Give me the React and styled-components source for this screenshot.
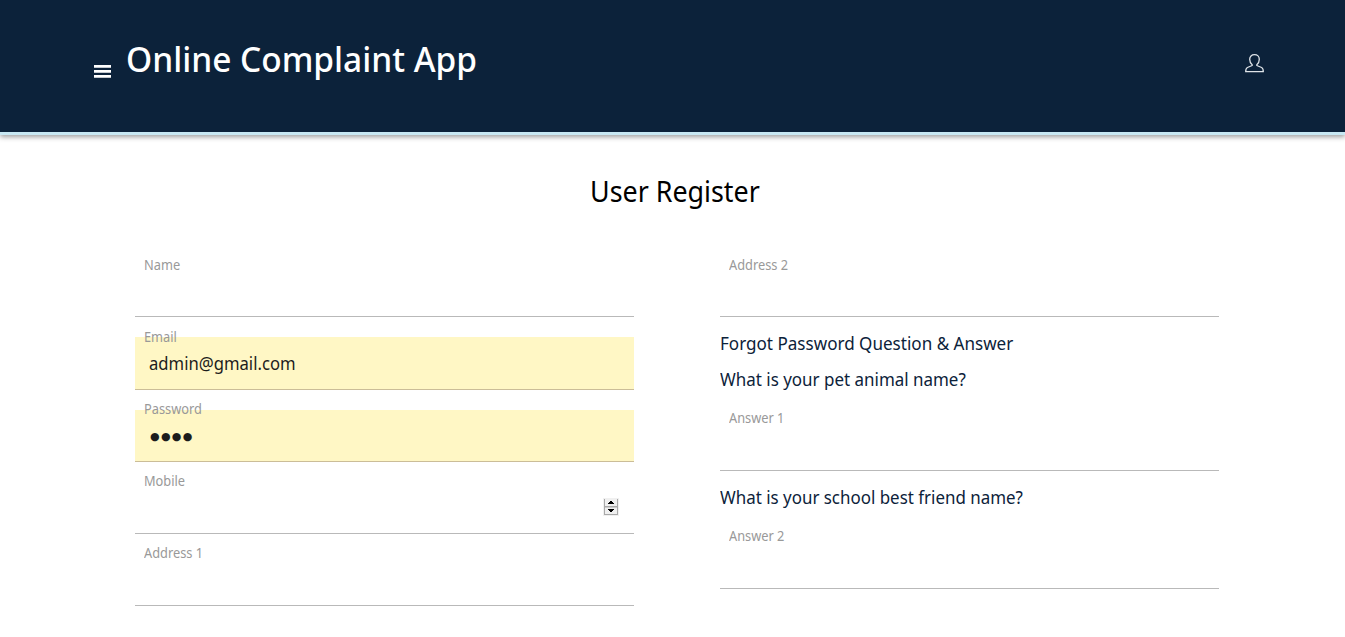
import React from "react";
import styled, { createGlobalStyle } from "styled-components";

const GlobalStyle = createGlobalStyle`
  * { box-sizing: border-box; }
  html, body { height: 100%; }
  body {
    margin: 0;
    overflow: hidden;
    background: #fff;
    font-family: "Noto Sans", "Open Sans", sans-serif;
    color: #0c223a;
  }
`;

const Header = styled.header`
  display: flex;
  align-items: flex-start;
  height: 135px;
  padding: 0 81.5px 0 94px;
  background: #0c223a;
  border-bottom: 3px solid #c8e8f3;
  box-shadow: 0 2px 5px rgba(0, 0, 0, 0.38);
`;

const MenuIcon = styled.svg`
  width: 17px;
  height: 14px;
  margin-top: 65px;
  fill: #fff;
`;

const Text = styled.span`
  display: inline-block;
  white-space: nowrap;
  transform: scaleX(${(p) => p.$squeeze || 1});
  transform-origin: left center;
`;

const Brand = styled.h1`
  flex: 1;
  margin: 34px 0 0 15px;
  font-size: 35px;
  font-weight: 500;
  line-height: 50px;
  color: #fff;
`;

const UserIcon = styled.svg`
  width: 19px;
  height: 19px;
  margin-top: 54px;
  fill: none;
  stroke: #dfe4e8;
  stroke-width: 1.3;
  stroke-linejoin: round;
`;

const Title = styled.h2`
  margin: 35px 0 0 590px;
  height: 75px;
  font-size: 28.5px;
  font-weight: 400;
  line-height: 42px;
  color: #000;
`;

const Form = styled.form`
  display: grid;
  grid-template-columns: 499px 499px;
  column-gap: 86px;
  padding-left: 135px;
`;

const Column = styled.div`
  display: flex;
  flex-direction: column;
`;

const Row = styled.div`
  position: relative;
  display: flex;
  flex-direction: column;
  justify-content: flex-end;
  height: ${(p) => p.$height || 72}px;
`;

const Label = styled.label`
  position: absolute;
  left: 9px;
  bottom: ${(p) => p.$bottom || 44}px;
  font-size: 14.8px;
  line-height: 20px;
  color: #999;
`;

const Control = styled.div`
  display: flex;
  align-items: center;
  justify-content: ${(p) => (p.$end ? "flex-end" : "flex-start")};
  height: ${(p) => p.$height || 53}px;
  padding: 0 15px 0 14px;
  background: ${(p) => (p.$filled ? "#fff7c5" : "transparent")};
  border-bottom: 1px solid ${(p) => (p.$filled ? "#cbbd98" : "#b9b9b9")};
  font-size: 18px;
  color: #1c1c1c;
`;

const Dots = styled.span`
  padding: 3px 0 0 1px;
  font-family: "DejaVu Sans", sans-serif;
  font-size: 11px;
  line-height: 20px;
  letter-spacing: 1.3px;
`;

const Spinner = styled.svg`
  width: 16px;
  height: 18px;
`;

const Question = styled.p`
  margin: 0;
  height: 36px;
  font-size: 18px;
  line-height: 36px;
`;

const Questions = styled.div`
  padding-top: 8px;
`;

function Field({ label, squeeze = 0.865, height, bottom, controlHeight, filled, end, children }) {
  return (
    <Row $height={height}>
      <Control $filled={filled} $height={controlHeight} $end={end}>{children}</Control>
      <Label $bottom={bottom}><Text $squeeze={squeeze}>{label}</Text></Label>
    </Row>
  );
}

export default function App() {
  return (
    <>
      <GlobalStyle />
      <Header>
        <MenuIcon viewBox="0 0 17 14">
          <path d="M0 0h17v2.7H0zM0 5h17v2.7H0zM0 10h17v2.7H0z" />
        </MenuIcon>
        <Brand><Text $squeeze={0.955}>Online Complaint App</Text></Brand>
        <UserIcon viewBox="0 0 19 19">
          <path d="M7.2 10.7C5.5 9.4 4.7 7.3 4.7 5.2c0-2.8 1.9-4.5 4.8-4.5s4.8 1.7 4.8 4.5c0 2.1-.8 4.2-2.5 5.5v.8l4.8 2c1.1.5 1.7 1.5 1.7 4.2H.7c0-2.7.6-3.7 1.7-4.2l4.8-2z" />
        </UserIcon>
      </Header>
      <Title><Text $squeeze={0.942}>User Register</Text></Title>
      <Form>
        <Column>
          <Field label="Name" bottom={43} />
          <Field label="Email" height={73} filled>
            <Text $squeeze={0.925}>admin@gmail.com</Text>
          </Field>
          <Field label="Password" controlHeight={52} filled>
            <Dots>●●●●</Dots>
          </Field>
          <Field label="Mobile" end>
            <Spinner viewBox="0 0 16 18">
              <path fill="#f0f0f0" d="M0 0h16v18H0z" />
              <path fill="#a9a9a9" d="M1 1h1v16H1zM14 1h1v16h-1zM1 8h14v1.4H1zM1 16h14v1H1z" />
              <path fill="#000" d="M7 3h2v1h1v1h1v1H5V5h1V4h1zM5 11h6v1h-1v1H9v1H7v-1H6v-1H5z" />
            </Spinner>
          </Field>
          <Field label="Address 1" />
        </Column>
        <Column>
          <Field label="Address 2" bottom={43} />
          <Questions>
            <Question><Text $squeeze={0.948}>Forgot Password Question &amp; Answer</Text></Question>
            <Question><Text $squeeze={0.942}>What is your pet animal name?</Text></Question>
          </Questions>
          <Field label="Answer 1" height={74} bottom={44} />
          <Questions>
            <Question><Text $squeeze={0.94}>What is your school best friend name?</Text></Question>
          </Questions>
          <Field label="Answer 2" height={74} bottom={44} />
        </Column>
      </Form>
    </>
  );
}
